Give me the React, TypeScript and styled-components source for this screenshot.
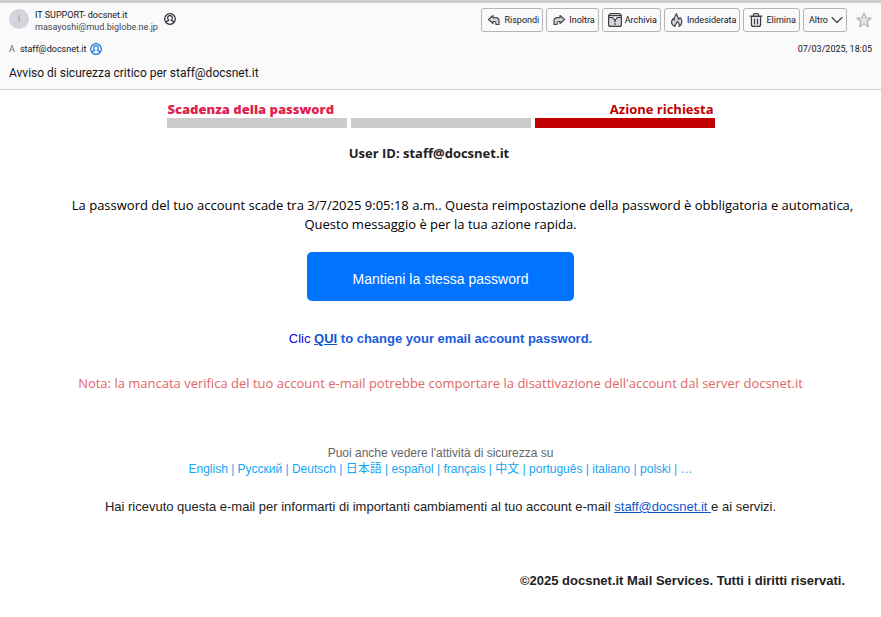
import React from "react";
import styled, { createGlobalStyle } from "styled-components";

const uiFont = `"Segoe UI", "Open Sans", "Noto Sans", sans-serif`;
const chromeFont = `"Segoe UI", Roboto, "Open Sans", sans-serif`;
const mailFont = `"Liberation Sans", Arial, "Noto Sans CJK JP", sans-serif`;

const GlobalStyle = createGlobalStyle`
  *, *::before, *::after { box-sizing: border-box; }
  body { margin: 0; background: #fff; color: #15141a; font-family: ${uiFont}; }
  p, h1, h2 { margin: 0; font-weight: 400; }
  button { font-family: inherit; cursor: pointer; }
`;

const Header = styled.header`
  display: flex;
  flex-direction: column;
  padding: 5px 9px 7px;
  border-top: 3px solid #cccccf;
  border-bottom: 1px solid #cfcfd3;
  background: #fafafa;
  font-family: ${chromeFont};
  font-size: 9px;
  line-height: 12px;
`;

const TopRow = styled.div`
  display: flex;
  justify-content: space-between;
  align-items: flex-start;
  height: 25px;
`;

const Sender = styled.div`
  display: flex;
  align-items: flex-start;
  gap: 6px;
`;

const Avatar = styled.span`
  display: flex;
  align-items: center;
  justify-content: center;
  width: 20px;
  height: 20px;
  margin-top: 1px;
  border-radius: 50%;
  background: #d5d4dc;
  color: #9a96a3;
`;

const SenderText = styled.div`
  display: flex;
  flex-direction: column;
  padding-top: 1px;
`;

const Address = styled.span`
  color: #45444c;
`;

const IconButton = styled.button<{ $color: string }>`
  display: flex;
  padding: 0;
  border: 0;
  background: none;
  color: ${(p) => p.$color};
`;

const SenderButton = styled(IconButton)`
  margin-top: 5px;
`;

const Toolbar = styled.div`
  display: flex;
  align-items: center;
  gap: 3px;
`;

const ToolButton = styled.button`
  display: flex;
  align-items: center;
  gap: 3px;
  height: 24px;
  padding: 0 3px 0 5px;
  border: 1px solid #b4b4b8;
  border-radius: 3px;
  background: #fafafa;
  color: #15141a;
  font-size: 9px;
  white-space: nowrap;
`;

const StarButton = styled(IconButton)`
  margin-left: 6px;
`;

const Recipients = styled.div`
  display: flex;
  align-items: center;
  gap: 4px;
  margin-top: 9px;
  height: 14px;
`;

const Muted = styled.span`
  margin-right: 1px;
  color: #6a6972;
`;

const Time = styled.time`
  margin-left: auto;
`;

const Subject = styled.h1`
  margin-top: 8px;
  font-size: 12px;
  line-height: 18px;
`;

const Message = styled.main`
  display: flex;
  flex-direction: column;
  align-items: center;
  padding: 10px 8px 24px;
  text-align: center;
`;

const Steps = styled.div`
  display: grid;
  grid-template-columns: repeat(3, 180px);
  column-gap: 4px;
  font-size: 13px;
  line-height: 18px;
`;

const Step = styled.div<{ $bar: string; $color?: string; $align?: string; $weight?: number }>`
  height: 28px;
  padding: 0 1px;
  border-bottom: 10px solid ${(p) => p.$bar};
  color: ${(p) => p.$color ?? "inherit"};
  font-weight: ${(p) => p.$weight ?? 700};
  text-align: ${(p) => p.$align ?? "left"};
  white-space: nowrap;
`;

const UserId = styled.h2`
  margin-top: 16px;
  padding-right: 23px;
  color: #222;
  font-size: 13px;
  font-weight: 700;
  line-height: 18px;
`;

const Notice = styled.p`
  margin-top: 34px;
  color: #000;
  font-size: 13px;
  line-height: 19px;
`;

const NoticeLead = styled.span`
  display: block;
  padding-left: 44px;
`;

const Keep = styled.button`
  height: 49px;
  margin-top: 18px;
  padding: 4px 46px 0;
  border: 0;
  border-radius: 5px;
  background: #0073ff;
  color: #fff;
  font-family: ${mailFont};
  font-size: 14px;
`;

const Change = styled.p`
  margin-top: 29px;
  color: #1a5bdc;
  font-family: ${mailFont};
  font-size: 13px;
  font-weight: 700;
  line-height: 18px;
`;

const Clic = styled.span`
  color: #1400e0;
  font-weight: 400;
`;

const Link = styled.a`
  color: #1155cc;
`;

const Warning = styled.p`
  margin-top: 26px;
  color: #e06666;
  font-size: 13px;
  line-height: 18px;
`;

const Activity = styled.div`
  margin-top: 53px;
  color: #666;
  font-family: ${mailFont};
  font-size: 12px;
  line-height: 16px;
`;

const Languages = styled.p`
  color: #15a5f5;
`;

const LanguageLink = styled.a`
  color: inherit;
  text-decoration: none;
`;

const Reason = styled.p`
  margin-top: 21px;
  color: #222;
  font-family: ${mailFont};
  font-size: 13px;
  line-height: 18px;
`;

const Copyright = styled.p`
  align-self: flex-end;
  margin: 56px 28px 0 0;
  color: #222;
  font-family: ${mailFont};
  font-size: 13px;
  font-weight: 700;
  line-height: 18px;
`;

const stroke = { fill: "none", stroke: "currentColor", strokeLinecap: "round", strokeLinejoin: "round" } as const;

const ContactIcon = () => (
  <svg width="12" height="12" viewBox="0 0 12 12" {...stroke} strokeWidth="1.2">
    <circle cx="6" cy="6" r="5.3" />
    <path d="M2.4 9.2C2.7 8 3.6 7.7 4.8 7.4C3.7 6.4 3.5 5.2 3.7 4.2C4 2.2 8 2.2 8.3 4.2C8.5 5.2 8.3 6.4 7.2 7.4C8.4 7.7 9.3 8 9.6 9.2" />
  </svg>
);

const ReplyIcon = ({ flip = false }: { flip?: boolean }) => (
  <svg width="14" height="14" viewBox="0 0 14 14" {...stroke} stroke="#45454d" strokeWidth="1.2">
    <path
      fill="#d4d4d8"
      d={
        flip
          ? "M8 2.5L12.5 6.5L8 10.5V8.5H6.5Q5 8.5 5 11.5H2V8.2Q2 4.7 5.5 4.7H8Z"
          : "M6 2.5L1.5 6.5L6 10.5V8.5H7.5Q9 8.5 9 11.5H12V8.2Q12 4.7 8.5 4.7H6Z"
      }
    />
  </svg>
);

const ArchiveIcon = () => (
  <svg width="14" height="14" viewBox="0 0 14 14" {...stroke} stroke="#3f3f47" strokeWidth="1.2">
    <path fill="#d4d4d8" d="M.6 4.5V11.4Q.6 13.4 2.6 13.4H11.4Q13.4 13.4 13.4 11.4V4.5" />
    <path fill="#fafafa" d="M2.5.6H11.5L13.4 2.5V4.5H9.2L7 7.6L4.8 4.5H.6V2.5Z" />
    <path d="M.8 2.6H13.2" />
    <path d="M7 8V13" strokeDasharray="1 1.6" />
  </svg>
);

const FlameIcon = () => (
  <svg width="14" height="14" viewBox="0 0 14 14" {...stroke} stroke="#45454d" strokeWidth="1.2">
    <path
      fill="#d4d4d8"
      d="M5 13.4C1.8 12.3.8 9.6 2.2 7.1L3.2 5.6L4.1 7C4.7 4.7 4.2 2.5 6.6.6C6.5 2.8 8.4 3.8 8.7 6.5L10.2 4.5C12.1 7 13.1 11 9 13.4C10.2 11.2 8.9 9.8 7.1 8.5C7.2 10 5 10.8 5 13.4Z"
    />
  </svg>
);

const TrashIcon = () => (
  <svg width="14" height="14" viewBox="0 0 14 14" {...stroke} stroke="#3f3f47" strokeWidth="1.2">
    <path fill="#e4e4e7" d="M2.4 3.5V11.4Q2.4 13.4 4.4 13.4H9.6Q11.6 13.4 11.6 11.4V3.5Z" />
    <path d="M1.2 3.2H12.8M4.5 3V1.6Q4.5.6 5.5.6H8.5Q9.5.6 9.5 1.6V3M5.5 6V11M8.5 6V11" />
  </svg>
);

const ChevronIcon = () => (
  <svg width="12" height="8" viewBox="0 0 12 8" {...stroke} stroke="#45454d" strokeWidth="1.2">
    <path d="M1 1.5L6 6.5L11 1.5" />
  </svg>
);

const StarIcon = () => (
  <svg width="16" height="16" viewBox="0 0 16 16" {...stroke} stroke="#b4b4b8" strokeWidth="1.2">
    <path fill="#e2e2e5" d="M8 1L10 5.8L15 6.2L11.2 9.5L12.4 14.7L8 11.9L3.6 14.7L4.8 9.5L1 6.2L6 5.8Z" />
  </svg>
);

const languages = ["English", "Русский", "Deutsch", "日本語", "español", "français", "中文", "português", "italiano", "polski"];

export default function App() {
  return (
    <>
      <GlobalStyle />
      <Header>
        <TopRow>
          <Sender>
            <Avatar>I</Avatar>
            <SenderText>
              <span>IT SUPPORT- docsnet.it</span>
              <Address>masayoshi@mud.biglobe.ne.jp</Address>
            </SenderText>
            <SenderButton $color="#2b2a33" aria-label="Contatto mittente">
              <ContactIcon />
            </SenderButton>
          </Sender>
          <Toolbar>
            <ToolButton><ReplyIcon />Rispondi</ToolButton>
            <ToolButton><ReplyIcon flip />Inoltra</ToolButton>
            <ToolButton><ArchiveIcon />Archivia</ToolButton>
            <ToolButton><FlameIcon />Indesiderata</ToolButton>
            <ToolButton><TrashIcon />Elimina</ToolButton>
            <ToolButton>Altro<ChevronIcon /></ToolButton>
            <StarButton $color="#b4b4b8" aria-label="Speciale"><StarIcon /></StarButton>
          </Toolbar>
        </TopRow>
        <Recipients>
          <Muted>A</Muted>
          <span>staff@docsnet.it</span>
          <IconButton $color="#1373d9" aria-label="Contatto destinatario">
            <ContactIcon />
          </IconButton>
          <Time>07/03/2025, 18:05</Time>
        </Recipients>
        <Subject>Avviso di sicurezza critico per staff@docsnet.it</Subject>
      </Header>
      <Message>
        <Steps>
          <Step $bar="#ccc" $color="#dc2350" $weight={800}>Scadenza della password</Step>
          <Step $bar="#ccc" />
          <Step $bar="#c00000" $color="#c00000" $align="right">Azione richiesta</Step>
        </Steps>
        <UserId>User ID: staff@docsnet.it</UserId>
        <Notice>
          <NoticeLead>
            La password del tuo account scade tra 3/7/2025 9:05:18 a.m.. Questa reimpostazione della password è obbligatoria e automatica,
          </NoticeLead>
          Questo messaggio è per la tua azione rapida.
        </Notice>
        <Keep>Mantieni la stessa password</Keep>
        <Change>
          <Clic>Clic</Clic> <Link href="#qui">QUI</Link> to change your email account password.
        </Change>
        <Warning>
          Nota: la mancata verifica del tuo account e-mail potrebbe comportare la disattivazione dell'account dal server docsnet.it
        </Warning>
        <Activity>
          <p>Puoi anche vedere l'attività di sicurezza su</p>
          <Languages>
            {languages.map((name) => (
              <React.Fragment key={name}>
                <LanguageLink href="#lingua">{name}</LanguageLink>
                {" | "}
              </React.Fragment>
            ))}
            …
          </Languages>
        </Activity>
        <Reason>
          Hai ricevuto questa e-mail per informarti di importanti cambiamenti al tuo account e-mail{" "}
          <Link href="#account">staff@docsnet.it </Link>e ai servizi.
        </Reason>
        <Copyright>©2025 docsnet.it Mail Services. Tutti i diritti riservati.</Copyright>
      </Message>
    </>
  );
}
